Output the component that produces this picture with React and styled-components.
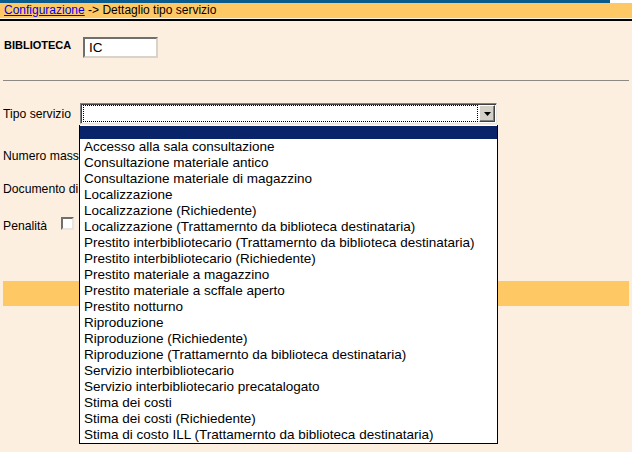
import styled, { createGlobalStyle } from "styled-components"

const GlobalStyle = createGlobalStyle`
  html, body {
    margin: 0;
    padding: 0;
    background: #fdefdf;
    font-family: "Liberation Sans", Arial, sans-serif;
    color: #000;
  }
`

const services = [
  "Accesso alla sala consultazione",
  "Consultazione materiale antico",
  "Consultazione materiale di magazzino",
  "Localizzazione",
  "Localizzazione (Richiedente)",
  "Localizzazione (Trattamernto da biblioteca destinataria)",
  "Prestito interbibliotecario (Trattamernto da biblioteca destinataria)",
  "Prestito interbibliotecario (Richiedente)",
  "Prestito materiale a magazzino",
  "Prestito materiale a scffale aperto",
  "Prestito notturno",
  "Riproduzione",
  "Riproduzione (Richiedente)",
  "Riproduzione (Trattamernto da biblioteca destinataria)",
  "Servizio interbibliotecario",
  "Servizio interbibliotecario precatalogato",
  "Stima dei costi",
  "Stima dei costi (Richiedente)",
  "Stima di costo ILL (Trattamernto da biblioteca destinataria)",
]

export default function App() {
  return (
    <Page>
      <GlobalStyle />
      <TopStrip>
        <span />
      </TopStrip>
      <Header>
        <a href="#">Configurazione</a> -&gt; Dettaglio tipo servizio
      </Header>
      <HeaderRule />

      <Form>
        <Row $top={16} $align="flex-start">
          <Label $bold>BIBLIOTECA</Label>
          <TextBox>IC</TextBox>
        </Row>

        <Divider />

        <Row $top={22}>
          <Label>Tipo servizio</Label>
          <SelectWrap>
            <SelectBox>
              <FocusArea />
              <DropButton>
                <svg width="7" height="4" viewBox="0 0 7 4">
                  <polygon points="0,0 7,0 3.5,4" fill="#000" />
                </svg>
              </DropButton>
            </SelectBox>
            <OptionList>
              <Option $selected />
              {services.map((s) => (
                <Option key={s}>{s}</Option>
              ))}
            </OptionList>
          </SelectWrap>
        </Row>

        <Row $top={21}>
          <Label>Numero mass</Label>
        </Row>
        <Row $top={12}>
          <Label>Documento di</Label>
        </Row>
        <Row $top={16}>
          <Label $auto>Penalità</Label>
          <CheckBox />
        </Row>

        <ActionBar />
      </Form>
    </Page>
  )
}

const Page = styled.div`
  width: 632px;
  height: 452px;
  overflow: hidden;
`

const TopStrip = styled.div`
  height: 3px;
  background: #0b5a8c;
  display: flex;
  justify-content: flex-end;

  span {
    width: 22px;
    background: #fff;
  }
`

const Header = styled.div`
  height: 15px;
  line-height: 15px;
  background: #fec965;
  border-bottom: 1px solid #fff3dc;
  padding-left: 4px;
  font-size: 12px;
  white-space: nowrap;

  a {
    color: #0000ee;
    text-decoration: underline;
  }
`

const HeaderRule = styled.div`
  height: 2px;
  background: #000;
`

const Form = styled.div`
  padding: 0 3px;
`

const Row = styled.div`
  display: flex;
  align-items: ${(p) => p.$align || "center"};
  min-height: 21px;
  margin-top: ${(p) => p.$top}px;
`

const Label = styled.div`
  width: ${(p) => (p.$auto ? "auto" : "77px")};
  margin-right: ${(p) => (p.$auto ? "14px" : "0")};
  font-size: ${(p) => (p.$bold ? "11px" : "12.2px")};
  font-weight: ${(p) => (p.$bold ? "bold" : "normal")};
  line-height: 16px;
  white-space: nowrap;
  overflow: hidden;
  padding-left: ${(p) => (p.$bold ? "1px" : "0")};
`

const TextBox = styled.div`
  margin-left: 2px;
  width: 67px;
  height: 17px;
  background: #fff;
  border: 2px solid;
  border-color: #6f6f6f #d8d4cc #d8d4cc #6f6f6f;
  font-size: 13.5px;
  line-height: 17px;
  padding-left: 4px;
`

const Divider = styled.div`
  height: 1px;
  background: #8d8a86;
  margin-top: 22px;
`

const SelectWrap = styled.div`
  position: relative;
  width: 417px;
`

const SelectBox = styled.div`
  height: 21px;
  box-sizing: border-box;
  background: #fff;
  border-top: 1px solid #808080;
  border-left: 1px solid #808080;
  border-right: 1px solid #e8e6e2;
  border-bottom: 1px solid #e8e6e2;
  box-shadow: inset 1px 1px 0 #404040;
  display: flex;
  padding: 1px 1px 1px 2px;
`

const FocusArea = styled.div`
  flex: 1;
  border: 1px dotted #000;
  margin-right: 1px;
`

const DropButton = styled.div`
  width: 16px;
  box-sizing: border-box;
  background: #d4d0c8;
  border: 1px solid;
  border-color: #fff #404040 #404040 #fff;
  box-shadow: inset -1px -1px 0 #808080;
  display: flex;
  align-items: center;
  justify-content: center;
`

const OptionList = styled.div`
  position: absolute;
  left: -1px;
  top: 22px;
  width: 419px;
  box-sizing: border-box;
  background: #fff;
  border: 1px solid #000;
  border-top: none;
  padding-top: 1px;
`

const Option = styled.div`
  height: ${(p) => (p.$selected ? "13px" : "16px")};
  line-height: 16px;
  font-size: 13.5px;
  padding-left: 4px;
  white-space: nowrap;
  background: ${(p) => (p.$selected ? "#0a246a" : "transparent")};
`

const CheckBox = styled.span`
  width: 9px;
  height: 9px;
  background: #fff;
  border: 2px solid;
  border-color: #6f6f6f #e8e6e2 #e8e6e2 #6f6f6f;
  margin-top: -4px;
`

const ActionBar = styled.div`
  height: 25px;
  margin-top: 45px;
  background: #fec965;
`
